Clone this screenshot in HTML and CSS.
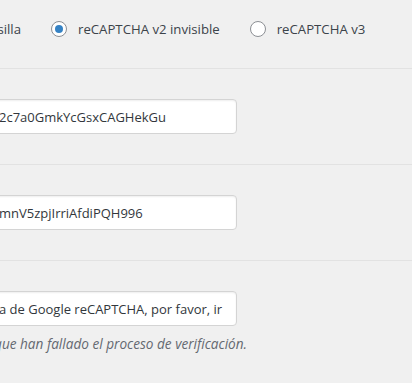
FILE: index.html
```html
<!DOCTYPE html>
<html lang="es">
<head>
  <meta charset="UTF-8" />
  <meta name="viewport" content="width=device-width, initial-scale=1.0"/>
  <title>Ajustes reCAPTCHA</title>
  <link rel="stylesheet" href="styles.css">
</head>
<body>

  <!-- Tipo de reCAPTCHA -->
  <div class="row row-type">
    <div class="radio-group">
      <label class="option option-cut">
        <span class="cut-text">reCAPTCHA v2 casilla</span>
      </label>
      <label class="option">
        <input type="radio" name="version" checked>
        reCAPTCHA v2 invisible
      </label>
      <label class="option">
        <input type="radio" name="version">
        reCAPTCHA v3
      </label>
    </div>
  </div>

  <!-- Clave del sitio -->
  <div class="row">
    <input type="text" class="field" value="2c7a0GmkYcGsxCAGHekGu">
  </div>

  <!-- Clave secreta -->
  <div class="row">
    <input type="text" class="field" value="mnV5zpjIrriAfdiPQH996">
  </div>

  <!-- Mensaje de error -->
  <div class="row row-last">
    <input type="text" class="field" value="a de Google reCAPTCHA, por favor, ir atrás e inténtelo de nuevo.">
    <div class="description">
      <span>Mensaje que se mostrará a los usuarios que han fallado el proceso de verificación.</span>
    </div>
  </div>

</body>
</html>
```

FILE: styles.css
```css
* {
  margin: 0;
  padding: 0;
  box-sizing: border-box;
}

body {
  background: #f0f0f0;
  color: #3c434a;
  font-family: 'Open Sans', 'Noto Sans', sans-serif;
  font-size: 13.2px;
  overflow: hidden;
}

.row {
  padding: 30px 0 30px;
  border-bottom: 1px solid #e2e2e2;
}

.row-type {
  padding: 19px 0 29px;
}

.row-last {
  padding-bottom: 29px;
}

.radio-group {
  display: flex;
  align-items: center;
  gap: 30px;
  line-height: 20px;
}

.option {
  display: flex;
  align-items: center;
  white-space: nowrap;
}

/* label cortado por el borde izquierdo */
.option-cut {
  width: 21px;
  overflow: hidden;
  justify-content: flex-end;
}

.option input[type="radio"] {
  appearance: none;
  width: 16px;
  height: 16px;
  margin-right: 11px;
  border: 1px solid #8c8f94;
  border-radius: 50%;
  background: white;
  display: inline-flex;
  align-items: center;
  justify-content: center;
}

.option input[type="radio"]:checked::before {
  content: '';
  width: 8px;
  height: 8px;
  border-radius: 50%;
  background: #3582c4;
}

.field {
  display: block;
  width: 248px;
  height: 35px;
  margin-left: -11px;
  padding: 0 12px 0 9px;
  border: 1px solid #d4d4d4;
  border-radius: 4px;
  background: white;
  box-shadow: inset 0 1px 2px rgba(0, 0, 0, 0.07);
  color: #32373c;
  font-family: inherit;
  font-size: 13px;
}

.description {
  width: 247px;
  margin-top: 8px;
  display: flex;
  justify-content: flex-end;
  overflow: hidden;
  white-space: nowrap;
  line-height: 20px;
  font-size: 13.6px;
  font-style: italic;
  color: #646970;
}
```
